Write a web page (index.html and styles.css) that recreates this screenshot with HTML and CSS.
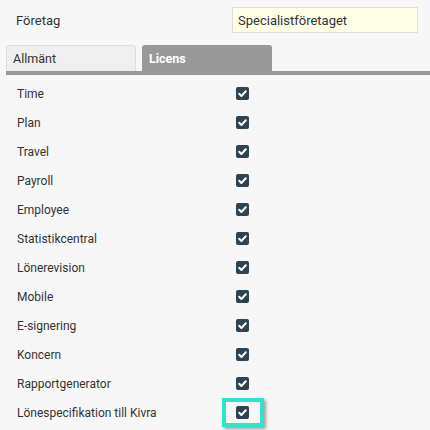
FILE: index.html
```html
<!DOCTYPE html>
<html>
<head>
<meta charset="utf-8">
<link rel="stylesheet" href="styles.css">
</head>
<body>
<div class="page">
  <div class="top">
    <div class="top-label">Företag</div>
    <div class="top-input">Specialistföretaget</div>
  </div>
  <div class="tabs">
    <div class="tab">Allmänt</div>
    <div class="tab active">Licens</div>
  </div>
  <div class="tabbar"></div>
  <div class="rows">
    <div class="row"><span class="label">Time</span><span class="cb"><svg viewBox="0 0 13 13"><path d="M3.2 6.8 L5.4 9 L9.8 4.2" /></svg></span></div>
    <div class="row"><span class="label">Plan</span><span class="cb"><svg viewBox="0 0 13 13"><path d="M3.2 6.8 L5.4 9 L9.8 4.2" /></svg></span></div>
    <div class="row"><span class="label">Travel</span><span class="cb"><svg viewBox="0 0 13 13"><path d="M3.2 6.8 L5.4 9 L9.8 4.2" /></svg></span></div>
    <div class="row"><span class="label">Payroll</span><span class="cb"><svg viewBox="0 0 13 13"><path d="M3.2 6.8 L5.4 9 L9.8 4.2" /></svg></span></div>
    <div class="row"><span class="label">Employee</span><span class="cb"><svg viewBox="0 0 13 13"><path d="M3.2 6.8 L5.4 9 L9.8 4.2" /></svg></span></div>
    <div class="row"><span class="label">Statistikcentral</span><span class="cb"><svg viewBox="0 0 13 13"><path d="M3.2 6.8 L5.4 9 L9.8 4.2" /></svg></span></div>
    <div class="row"><span class="label">Lönerevision</span><span class="cb"><svg viewBox="0 0 13 13"><path d="M3.2 6.8 L5.4 9 L9.8 4.2" /></svg></span></div>
    <div class="row"><span class="label">Mobile</span><span class="cb"><svg viewBox="0 0 13 13"><path d="M3.2 6.8 L5.4 9 L9.8 4.2" /></svg></span></div>
    <div class="row"><span class="label">E-signering</span><span class="cb"><svg viewBox="0 0 13 13"><path d="M3.2 6.8 L5.4 9 L9.8 4.2" /></svg></span></div>
    <div class="row"><span class="label">Koncern</span><span class="cb"><svg viewBox="0 0 13 13"><path d="M3.2 6.8 L5.4 9 L9.8 4.2" /></svg></span></div>
    <div class="row"><span class="label">Rapportgenerator</span><span class="cb"><svg viewBox="0 0 13 13"><path d="M3.2 6.8 L5.4 9 L9.8 4.2" /></svg></span></div>
    <div class="row"><span class="label">Lönespecifikation till Kivra</span><span class="cb highlighted"><svg viewBox="0 0 13 13"><path d="M3.2 6.8 L5.4 9 L9.8 4.2" /></svg></span></div>
  </div>
</div>
</body>
</html>
```
FILE: styles.css
```css
html, body {
  margin: 0;
  padding: 0;
  background: #f7f7f7;
}
body {
  font-family: Roboto, "Liberation Sans", sans-serif;
  font-size: 12px;
  color: #333;
  width: 430px;
  height: 430px;
  overflow: hidden;
}
.page {
  display: flex;
  flex-direction: column;
}
.top {
  display: flex;
  align-items: center;
  height: 26px;
  margin-top: 7px;
}
.top-label {
  width: 216px;
  padding-left: 16px;
  box-sizing: border-box;
  font-size: 13px;
}
.top-input {
  margin-left: 16px;
  width: 186px;
  height: 26px;
  box-sizing: border-box;
  border: 1px solid #dcdcdc;
  background: #ffffe6;
  padding-left: 5px;
  display: flex;
  align-items: center;
  font-size: 13px;
  color: #333;
}
.tabs {
  display: flex;
  gap: 6px;
  margin-top: 12px;
  padding-left: 6px;
}
.tab {
  width: 130px;
  height: 26px;
  box-sizing: border-box;
  border: 1px solid #ddd;
  border-bottom: none;
  border-radius: 3px 3px 0 0;
  background: #efefef;
  padding-left: 6px;
  display: flex;
  align-items: center;
  font-size: 12.5px;
  color: #333;
}
.tab.active {
  background: #999;
  border-color: #999;
  color: #fff;
  font-weight: bold;
}
.tabbar {
  margin-left: 6px;
  height: 4px;
  background: #999;
}
.rows {
  display: flex;
  flex-direction: column;
  padding-top: 4px;
}
.row {
  display: flex;
  align-items: center;
  height: 29px;
}
.label {
  width: 236px;
  padding-left: 17px;
  box-sizing: border-box;
  font-size: 12px;
  color: #333;
}
.cb {
  width: 13px;
  height: 13px;
  border-radius: 2px;
  background: #2f4350;
  display: flex;
  position: relative;
}
.cb svg {
  width: 13px;
  height: 13px;
}
.cb path {
  fill: none;
  stroke: #fff;
  stroke-width: 2;
  stroke-linecap: round;
  stroke-linejoin: round;
}
.cb.highlighted::after {
  content: "";
  position: absolute;
  left: -14px;
  top: -8px;
  width: 34px;
  height: 21px;
  border: 4px solid #2ee5cc;
  box-shadow: 2px 2px 3px rgba(0,0,0,0.35);
}
```
